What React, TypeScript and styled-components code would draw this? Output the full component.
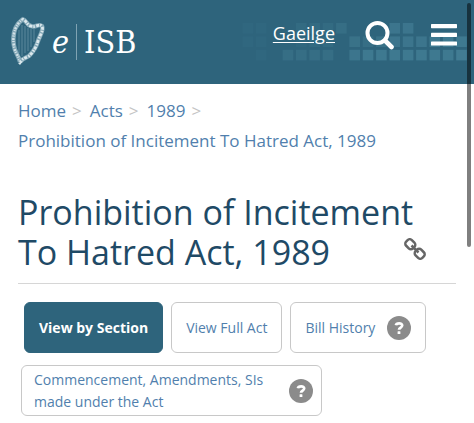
import React from 'react';
import styled, { createGlobalStyle } from 'styled-components';

const teal = '#2e647c';
const linkBlue = '#517fad';

const GlobalStyle = createGlobalStyle`
  *, *::before, *::after { box-sizing: border-box; }
  body {
    margin: 0;
    background: #fff;
    font-family: 'Open Sans', 'Noto Sans', sans-serif;
    overflow: hidden;
  }
`;

const Header = styled.header`
  position: relative;
  display: flex;
  align-items: center;
  justify-content: space-between;
  height: 84px;
  padding: 0 17px 0 10px;
  background: ${teal};
  color: #fff;
`;

const Mosaic = styled.svg`
  position: absolute;
  top: 23px;
  right: 0;
`;

const Brand = styled.a`
  position: relative;
  display: flex;
  align-items: center;
  color: #fff;
  text-decoration: none;
  font-family: 'DejaVu Serif Condensed', 'Liberation Serif', serif;
`;

const BrandE = styled.span`
  margin-left: 6px;
  font-size: 32px;
  line-height: 40px;
  font-style: italic;
`;

const BrandRule = styled.span`
  width: 1px;
  height: 36px;
  margin: 0 7px;
  background: #7fa3b3;
`;

const BrandName = styled.span`
  font-size: 32px;
  line-height: 40px;
`;

const Tools = styled.nav`
  position: relative;
  display: flex;
  align-items: center;
  padding-bottom: 14px;
`;

const Language = styled.a`
  margin-right: 30px;
  padding-bottom: 4px;
  color: #fff;
  font-size: 18px;
  line-height: 24px;
  text-decoration: underline;
  text-underline-offset: 2px;
`;

const IconButton = styled.button<{ $gap?: number }>`
  display: flex;
  padding: 0;
  margin-right: ${({ $gap = 0 }) => $gap}px;
  border: 0;
  background: none;
  color: inherit;
  cursor: pointer;
`;

const Main = styled.main`
  padding: 12px 18px;
`;

const Crumbs = styled.ol`
  display: flex;
  flex-wrap: wrap;
  margin: 0;
  padding: 0;
  list-style: none;
  font-size: 17px;
  line-height: 30px;
`;

const Crumb = styled.li`
  &:not(:last-child)::after {
    content: '>';
    margin: 0 8px 0 6px;
    color: #c4c4c4;
    font-size: 17px;
  }
`;

const CrumbLink = styled.a`
  color: ${linkBlue};
  text-decoration: none;
`;

const TitleBar = styled.div`
  display: flex;
  align-items: flex-end;
  justify-content: space-between;
  margin-top: 36px;
  padding-bottom: 11px;
  border-bottom: 1px solid #d6d6d6;
`;

const Title = styled.h1`
  flex: 1;
  margin: 0;
  color: #1f4a66;
  font-size: 34px;
  font-weight: 400;
  line-height: 40px;
`;

const Permalink = styled.a`
  display: flex;
  margin: 0 30px 12px -24px;
  color: #666;
`;

const Options = styled.div`
  display: flex;
  flex-wrap: wrap;
  gap: 12px 8px;
  padding: 18px 3px 0;
`;

const Option = styled.a<{ $active?: boolean; $wide?: boolean }>`
  display: flex;
  align-items: center;
  gap: 12px;
  min-height: 51px;
  margin-left: ${({ $active }) => ($active ? 3 : 0)}px;
  padding: ${({ $wide }) => ($wide ? '2px 8px 2px 12px' : '2px 14px')};
  border: 1px solid ${({ $active }) => ($active ? teal : '#c8c8c8')};
  border-radius: 6px;
  background: ${({ $active }) => ($active ? teal : '#fff')};
  color: ${({ $active }) => ($active ? '#fff' : linkBlue)};
  font-size: 14px;
  font-weight: ${({ $active }) => ($active ? 700 : 400)};
  line-height: 22px;
  text-decoration: none;
`;

const OptionText = styled.span`
  max-width: 243px;
`;

const ScrollThumb = styled.div`
  position: absolute;
  top: 3px;
  right: 3px;
  width: 4px;
  height: 244px;
  border-radius: 2px;
  background: rgba(0, 0, 0, 0.5);
`;

const mosaicRows: [number, number][][] = [
  [[0, 1], [1, 1], [4, 2], [5, 2], [6, 2], [7, 3], [11, 5], [12, 5]],
  [[0, 1], [1, 1], [4, 1], [5, 2], [6, 2], [8, 4], [9, 3], [10, 4], [11, 5], [12, 5], [13, 5], [14, 6], [15, 6], [16, 6]],
  [[1, 1], [3, 3], [4, 3], [5, 3], [6, 3], [8, 5], [9, 6], [10, 6], [11, 6], [12, 6], [13, 6], [14, 6], [15, 6], [16, 7]],
];

const HeaderMosaic = () => (
  <Mosaic width="234" height="38" viewBox="0 0 234 38" aria-hidden="true">
    {mosaicRows.map((row, y) =>
      row.map(([col, tone]) => (
        <rect
          key={`${col}-${y}`}
          x={2.6 + col * 13.35}
          y={y * 13.4}
          width="10.6"
          height="10.6"
          fill="#62a5b8"
          opacity={tone * 0.055}
        />
      )),
    )}
  </Mosaic>
);

const Harp = () => (
  <svg width="36" height="52" viewBox="0 0 36 52" fill="none" aria-hidden="true">
    <path d="M13 3C5 9 2 19 4 30c1 7 5 10 6 16" stroke="#83a8b7" strokeWidth="4.5" />
    <path d="M13 3C5 9 2 19 4 30c1 7 5 10 6 16" stroke="#d3e2e8" strokeWidth="2.5" strokeDasharray="2 1 1 1.5" />
    <path d="M12 3c5 1 4 6 9 7 5 2 8-3 11 0 2 4-2 9-4 15-2 7-5 11-9 15-3 2-6 2-9 6" stroke="#83a8b7" strokeWidth="4.5" />
    <path d="M12 3c5 1 4 6 9 7 5 2 8-3 11 0 2 4-2 9-4 15-2 7-5 11-9 15-3 2-6 2-9 6" stroke="#dbe8ed" strokeWidth="2.8" strokeDasharray="1.5 1.5 3 1" />
    <path d="M12 9v31M15 10v27M18 12v23M21 13v18M24 13v13M9 14v23" stroke="#6f9aac" strokeWidth=".7" />
    <path d="m8 47 5-2-3 4z" fill="#dce9ee" />
  </svg>
);

const SearchIcon = () => (
  <svg width="30" height="30" viewBox="0 0 30 30" fill="none" stroke="currentColor" aria-hidden="true">
    <circle cx="12.5" cy="13" r="10" strokeWidth="4" />
    <path d="m20 20.5 6.500 6.500" strokeWidth="4.600" strokeLinecap="round" />
  </svg>
);

const MenuIcon = () => (
  <svg width="26" height="22" viewBox="0 0 26 22" fill="currentColor" aria-hidden="true">
    <rect width="26" height="4.200" rx=".6" />
    <rect y="8.700" width="26" height="4.200" rx=".6" />
    <rect y="17.400" width="26" height="4.200" rx=".6" />
  </svg>
);

const ChainIcon = () => (
  <svg width="22" height="22" viewBox="0 0 22 22" fill="none" stroke="currentColor" strokeWidth="2.500" aria-hidden="true">
    <rect x="1.500" y="2.200" width="9.600" height="8" rx="3" transform="rotate(45 6.300 6.200)" />
    <rect x="10.900" y="11.800" width="9.600" height="8" rx="3" transform="rotate(45 15.700 15.800)" />
    <path d="m7.500 7.500 7 7" />
  </svg>
);

const HelpIcon = () => (
  <svg width="24" height="24" viewBox="0 0 24 24" fill="none" role="img" aria-label="Help">
    <circle cx="12" cy="12" r="12" fill="#8b8b8b" />
    <path d="M8.900 9.300C9.300 6.700 15.300 6.500 15.200 9.500c-.1 2-3.200 2.100-3.200 4.300" stroke="#fff" strokeWidth="2.700" />
    <rect x="10.600" y="15.300" width="2.800" height="2.800" rx=".4" fill="#fff" />
  </svg>
);

const crumbs = ['Home', 'Acts', '1989', 'Prohibition of Incitement To Hatred Act, 1989'];

export default function App() {
  return (
    <>
      <GlobalStyle />
      <Header>
        <HeaderMosaic />
        <Brand href="#" aria-label="eISB home">
          <Harp />
          <BrandE>e</BrandE>
          <BrandRule />
          <BrandName>ISB</BrandName>
        </Brand>
        <Tools>
          <Language href="#">Gaeilge</Language>
          <IconButton $gap={36} aria-label="Search"><SearchIcon /></IconButton>
          <IconButton aria-label="Menu"><MenuIcon /></IconButton>
        </Tools>
      </Header>
      <Main>
        <nav aria-label="Breadcrumb">
          <Crumbs>
            {crumbs.map((name) => (
              <Crumb key={name}><CrumbLink href="#">{name}</CrumbLink></Crumb>
            ))}
          </Crumbs>
        </nav>
        <TitleBar>
          <Title>Prohibition of Incitement To Hatred Act, 1989</Title>
          <Permalink href="#" aria-label="Permanent link"><ChainIcon /></Permalink>
        </TitleBar>
        <Options>
          <Option href="#" $active>View by Section</Option>
          <Option href="#">View Full Act</Option>
          <Option href="#">Bill History <HelpIcon /></Option>
          <Option href="#" $wide>
            <OptionText>Commencement, Amendments, SIs made under the Act</OptionText>
            <HelpIcon />
          </Option>
        </Options>
      </Main>
      <ScrollThumb />
    </>
  );
}
